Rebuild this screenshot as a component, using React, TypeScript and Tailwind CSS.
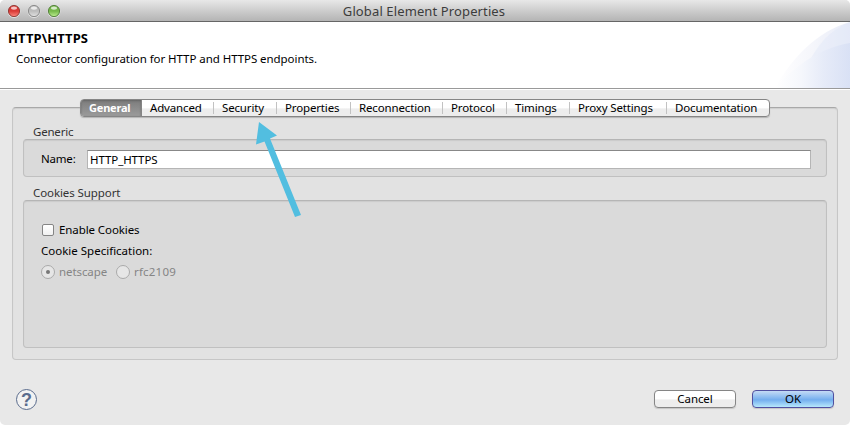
const tabs = [
  { label: "General", cls: "w-[60px]" },
  { label: "Advanced", cls: "w-[72px]" },
  { label: "Security", cls: "w-[63px]" },
  { label: "Properties", cls: "w-[74px]" },
  { label: "Reconnection", cls: "w-[92px]" },
  { label: "Protocol", cls: "w-[64px]" },
  { label: "Timings", cls: "w-[63px]" },
  { label: "Proxy Settings", cls: "w-[97px]" },
  { label: "Documentation", cls: "w-[103px]" },
];

function TrafficLights() {
  const lights = [
    { id: "close", x: 14, edge: "#8c3430", dark: "#d93a36", light: "#ff8a80" },
    { id: "minimise", x: 34, edge: "#858585", dark: "#bcbcbc", light: "#e2e2e2" },
    { id: "zoom", x: 54, edge: "#4d7a35", dark: "#76b84a", light: "#bdf08f" },
  ];
  return (
    <svg width="70" height="21" className="block">
      {lights.map((l) => (
        <g key={l.id}>
          <defs>
            <linearGradient id={l.id} x1="0" y1="0" x2="0" y2="1">
              <stop offset="0" stopColor={l.dark} />
              <stop offset="0.5" stopColor={l.dark} />
              <stop offset="1" stopColor={l.light} />
            </linearGradient>
          </defs>
          <circle cx={l.x} cy="11.7" r="5.9" fill="none" stroke="#fff" strokeOpacity=".5" />
          <circle cx={l.x} cy="11" r="5.6" fill={`url(#${l.id})`} stroke={l.edge} strokeWidth="0.9" />
          <ellipse cx={l.x} cy="8.1" rx="3" ry="1.7" fill="#fff" opacity=".7" />
        </g>
      ))}
    </svg>
  );
}

function Swoosh() {
  return (
    <svg width="80" height="66" viewBox="0 0 80 66" className="block">
      <defs>
        <linearGradient id="outer" gradientUnits="userSpaceOnUse" x1="5" x2="80" y1="0" y2="0">
          <stop offset="0" stopColor="#fff" />
          <stop offset=".5" stopColor="#f5f6fb" />
          <stop offset="1" stopColor="#e8ecf8" />
        </linearGradient>
        <linearGradient id="inner" gradientUnits="userSpaceOnUse" x1="5" x2="80" y1="0" y2="0">
          <stop offset="0" stopColor="#fff" />
          <stop offset=".35" stopColor="#f5f7fc" />
          <stop offset=".65" stopColor="#e6ebf8" />
          <stop offset="1" stopColor="#d9e1f5" />
        </linearGradient>
      </defs>
      <path d="M5 66C21 37 47 9 80 0V66Z" fill="url(#outer)" />
      <path d="M38 42C48 22 60 8 80 0V66H38Z" fill="#dfe6f7" opacity=".4" />
      <path d="M5 66C26 43 50 26 80 21V66Z" fill="url(#inner)" />
    </svg>
  );
}

const groupBox =
  "rounded-[4px] border border-[#c0c0c0] border-t-[#b5b5b5] bg-[#dadada] shadow-[inset_0_1px_1px_#cacaca]";

export default function App() {
  return (
    <div className="h-[425px] w-[850px] bg-white">
      <div className="relative flex h-full w-full flex-col overflow-hidden rounded-[5px] bg-[#e8e8e8] font-['Noto_Sans',sans-serif] text-[11.5px] leading-[16px] tracking-[-0.09px] text-black">
        <header className="flex h-[22px] shrink-0 border-b border-[#666] bg-linear-to-b from-[#e8e8e8] to-[#b4b4b4]">
          <TrafficLights />
          <h1 className="flex-1 pt-[2px] pr-[72px] text-center text-[13px] leading-[18px] tracking-[0.12px] text-[#3c3c3c]">
            Global Element Properties
          </h1>
        </header>
        <section className="flex h-[68px] shrink-0 justify-between border-b border-white bg-white shadow-[inset_0_-1px_0_#999]">
          <div className="pl-2 pt-[8px]">
            <h2 className="text-[13px] font-bold tracking-[0.1px]">HTTP\HTTPS</h2>
            <p className="pt-[5px] pl-2 tracking-[-0.06px]">Connector configuration for HTTP and HTTPS endpoints.</p>
          </div>
          <Swoosh />
        </section>
        <main className="mx-3 mt-[17px] h-[253px] shrink-0 rounded-[4px] border border-[#c6c6c6] border-t-[#a8a8a8] bg-[#e2e2e2] px-[10px] shadow-[inset_0_1px_1px_#cfcfcf]">
          <nav className="-mt-[9px] ml-[57px] flex h-[18px] w-[690px] overflow-hidden rounded-[4px] border border-[#858585] bg-linear-to-b from-white from-50% to-[#ededed] to-55% tracking-[-0.15px] shadow-[0_1px_1px_#b5b5b5]">
            {tabs.map((t, i) => (
              <div
                key={t.label}
                className={`${t.cls} flex shrink-0 items-center whitespace-nowrap ${
                  i === 0
                    ? "bg-linear-to-b from-[#7c7c7c] to-[#9b9b9b] pl-[8px] text-[11px] font-bold tracking-[-0.2px] text-white shadow-[inset_0_1px_2px_#666,1px_0_0_#858585]"
                    : "pl-[9px]"
                } ${i > 1 ? "relative before:absolute before:left-0 before:top-[2px] before:h-[12px] before:w-px before:bg-[#c2c2c2]" : ""}`}
              >
                {t.label}
              </div>
            ))}
          </nav>
          <h3 className="h-[22px] pl-[10px] pt-[7px] leading-[16px] tracking-[-0.2px] text-[#333]">Generic</h3>
          <div className={`${groupBox} flex h-[38px] pl-[17px] pt-[10px]`}>
            <label className="w-[46px] pt-[1px] tracking-[-0.2px]">Name:</label>
            <input
              readOnly
              value="HTTP_HTTPS"
              className="h-[19px] w-[724px] border border-[#b5b5b5] border-t-[#888] bg-white px-[2px] outline-none"
            />
          </div>
          <h3 className="h-[23px] pl-[10px] pt-[8px] leading-[16px] text-[#333]">Cookies Support</h3>
          <div className={`${groupBox} h-[148px] pl-[17px] pt-[21px]`}>
            <div className="flex h-4 items-center gap-[5px]">
              <i className="ml-px h-3 w-3 rounded-[2px] border border-[#858585] bg-linear-to-b from-white to-[#f1f1f1]" />
              <span>Enable Cookies</span>
            </div>
            <p className="pt-[5px] tracking-[0px]">Cookie Specification:</p>
            <div className="flex items-center pt-[5px] text-[#858585]">
              <i className="flex h-[14px] w-[14px] shrink-0 items-center justify-center rounded-full border border-[#aaa] bg-[#e6e6e6]">
                <b className="h-1 w-1 rounded-full bg-[#777]" />
              </i>
              <span className="w-[61px] pl-[4px]">netscape</span>
              <i className="h-[14px] w-[14px] shrink-0 rounded-full border border-[#aaa] bg-[#e6e6e6]" />
              <span className="pl-[4px] tracking-[0.2px]">rfc2109</span>
            </div>
          </div>
        </main>
        <footer className="flex items-start pt-[28px] pl-4">
          <div className="mt-px flex h-[21px] w-[21px] items-center justify-center rounded-full border border-[#5a6c8d] bg-[#f2f2f2] text-[18px] font-bold text-[#5a6c8d] font-['Liberation_Sans',sans-serif]">
            ?
          </div>
          <button className="ml-[617px] mt-[2px] h-[18px] w-[82px] rounded-[4px] border border-[#858585] bg-linear-to-b from-white from-50% to-[#ededed] to-55% leading-[16px] shadow-[0_1px_1px_#c5c5c5]">
            Cancel
          </button>
          <button className="ml-[16px] mt-[2px] h-[18px] w-[82px] rounded-[4px] border border-[#5050a0] bg-linear-to-b from-[#c4dbf5] via-[#73aeee] via-55% to-[#b7e8fb] leading-[16px] shadow-[0_1px_1px_#c5c5c5]">
            OK
          </button>
        </footer>
        <svg width="48" height="98" viewBox="254 121 48 98" className="pointer-events-none absolute left-[254px] top-[121px]">
          <path d="M259 122L277 135.500L270 138.500L301 215L295 217L264.500 141.500L256 144.500Z" fill="#52bee0" />
        </svg>
      </div>
    </div>
  );
}
